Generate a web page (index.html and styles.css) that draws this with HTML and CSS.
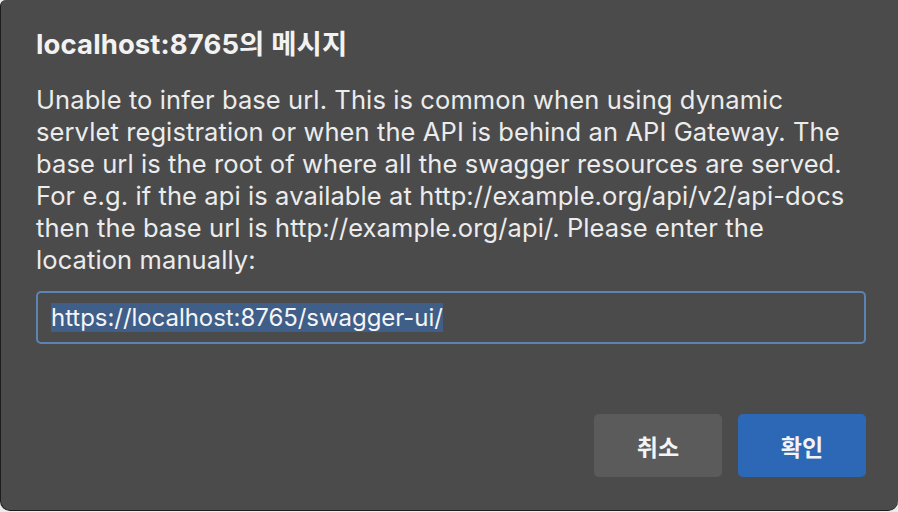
FILE: index.html
```html
<!DOCTYPE html>
<html lang="ko">
<head>
<meta charset="utf-8">
<link rel="stylesheet" href="styles.css">
</head>
<body>
<div class="dialog">
  <h1 class="title">localhost:8765의 메시지</h1>
  <p class="message">Unable to infer base url. This is common when using dynamic servlet registration or when the API is behind an API Gateway. The base url is the root of where all the swagger resources are served. For e.g. if the api is available at http://example.org/api/v2/api-docs then the base url is http://example.org/api/. Please enter the location manually:</p>
  <div class="field"><span class="selected">https://localhost:8765/swagger-ui/</span></div>
  <div class="actions">
    <button class="btn btn-cancel">취소</button>
    <button class="btn btn-ok">확인</button>
  </div>
</div>
</body>
</html>
```
FILE: styles.css
```css
html, body {
  margin: 0;
  padding: 0;
  background: #ececec;
}
body {
  width: 898px;
  height: 512px;
  overflow: hidden;
  font-family: Inter, "Noto Sans CJK KR", sans-serif;
}
.dialog {
  box-sizing: border-box;
  width: 898px;
  height: 511px;
  background: #4b4b4b;
  border-left: 1px solid #1e1e1e;
  border-bottom: 1px solid #1e1e1e;
  border-radius: 6px 0 10px 10px;
  padding: 28px 32px 0 35px;
  color: #ececec;
  display: flex;
  flex-direction: column;
}
.title {
  margin: 0;
  font-size: 27.5px;
  font-weight: 700;
  line-height: 32px;
  color: #f2f2f2;
  letter-spacing: 0.1px;
}
.message {
  margin: 24px 0 0 0;
  font-size: 25.5px;
  line-height: 32px;
  width: 815px;
  letter-spacing: 0.1px;
}
.field {
  margin-top: 15px;
  height: 53px;
  box-sizing: border-box;
  border: 2px solid #5b84b3;
  border-radius: 5px;
  padding: 0 0 0 13px;
  display: flex;
  align-items: center;
  font-size: 24px;
  color: #f5f5f5;
}
.selected {
  background: #3f5e88;
  line-height: 29px;
  letter-spacing: -0.05px;
}
.actions {
  margin-top: 70px;
  display: flex;
  justify-content: flex-end;
  gap: 16px;
}
.btn {
  width: 128px;
  height: 63px;
  border: none;
  border-radius: 5px;
  font-family: Inter, "Noto Sans CJK KR", sans-serif;
  font-size: 23px;
  font-weight: 700;
  color: #f4f4f4;
}
.btn-cancel {
  background: #5b5b5b;
}
.btn-ok {
  background: #2d68b6;
}
```
